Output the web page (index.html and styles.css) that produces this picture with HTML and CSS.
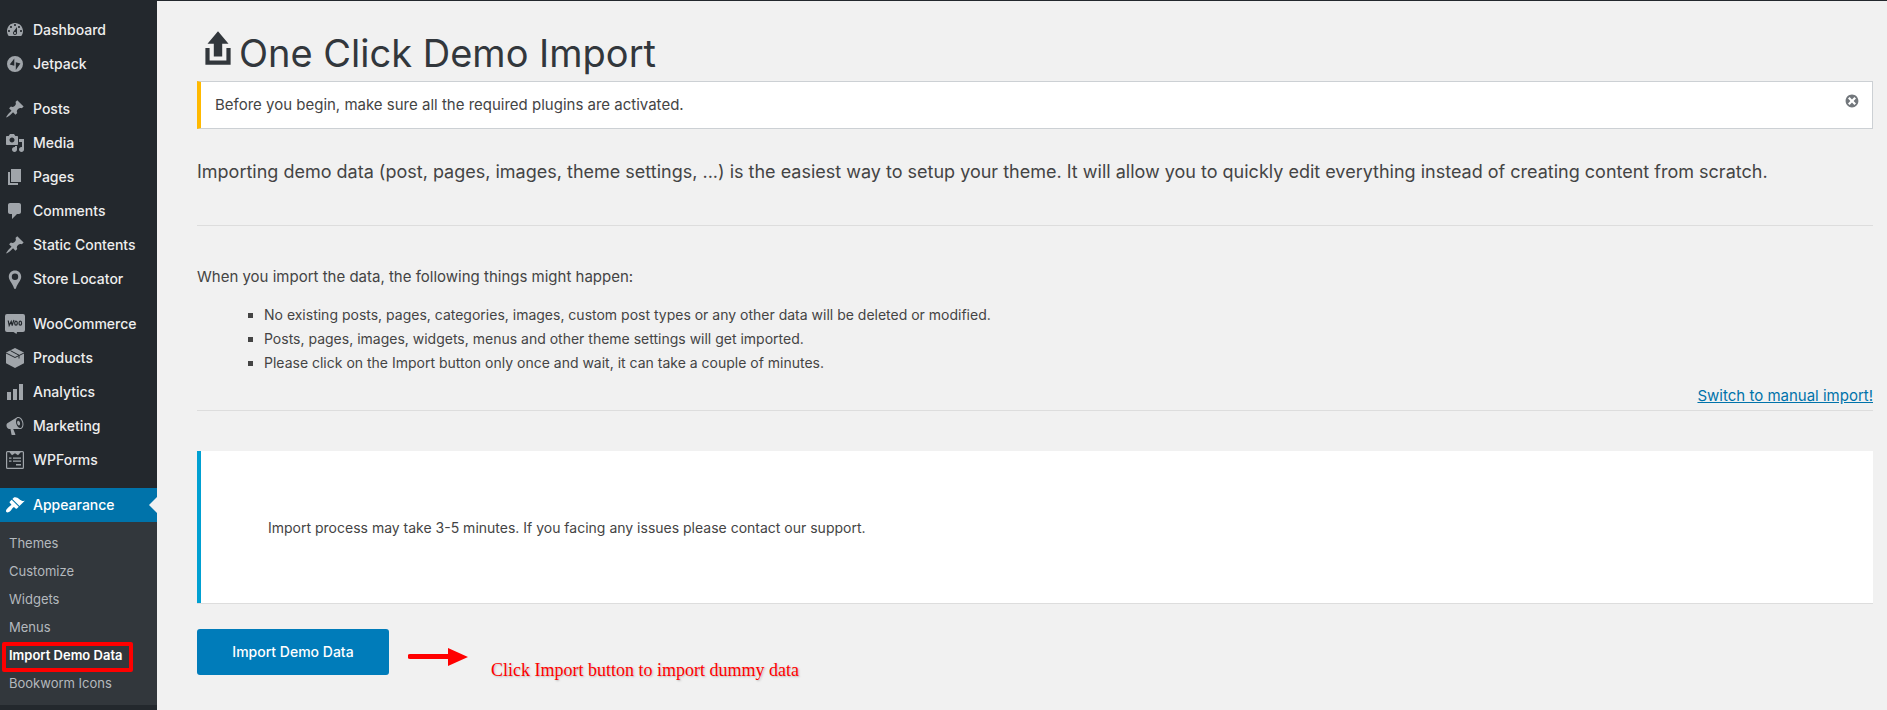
FILE: index.html
```html
<!DOCTYPE html>
<html lang="en">
<head>
<meta charset="utf-8">
<title>One Click Demo Import</title>
<link rel="stylesheet" href="styles.css">
</head>
<body>
<div class="admin">
  <nav class="sidebar" aria-label="Main menu">
    <ul class="menu">
      <li><a class="menu-link" href="#"><svg class="icon" viewBox="0 0 20 20"><path fill-rule="evenodd" d="M3.76 16h12.48c1.1-1.37 1.76-3.11 1.76-5 0-4.42-3.58-8-8-8s-8 3.58-8 8c0 1.89.66 3.63 1.76 5zM10 4c.55 0 1 .45 1 1s-.45 1-1 1-1-.45-1-1 .45-1 1-1zM6 6c.55 0 1 .45 1 1s-.45 1-1 1-1-.45-1-1 .45-1 1-1zm8 0c.55 0 1 .45 1 1s-.45 1-1 1-1-.45-1-1 .45-1 1-1zm-5.37 5.55L12 7v6c0 1.1-.9 2-2 2s-2-.9-2-2c0-.57.24-1.08.63-1.45zM4 10c.55 0 1 .45 1 1s-.45 1-1 1-1-.45-1-1 .45-1 1-1zm12 0c.55 0 1 .45 1 1s-.45 1-1 1-1-.45-1-1 .45-1 1-1zm-5 3c0-.55-.45-1-1-1s-1 .45-1 1 .45 1 1 1 1-.45 1-1z"/></svg>Dashboard</a></li>
      <li><a class="menu-link" href="#"><svg class="icon" viewBox="0 0 20 20"><path fill-rule="evenodd" d="M10 2a8 8 0 1 0 0 16 8 8 0 0 0 0-16zM9.300 4.500v7.200l-4.600-1.200zM10.800 8.300l4.600 1.200-4.600 6.500z"/></svg>Jetpack</a></li>
      <li class="group"><a class="menu-link" href="#"><svg class="icon" viewBox="0 0 20 20"><path d="M10.440 3.020l1.820-1.820 6.360 6.350-1.830 1.820c-1.050-.68-2.480-.57-3.410.36l-.75.75c-.92.93-1.040 2.350-.35 3.410l-1.830 1.820-2.410-2.410-2.800 2.790c-.42.42-3.380 2.710-3.800 2.290s1.860-3.390 2.280-3.810l2.790-2.790L4.100 9.360l1.830-1.820c1.050.69 2.480.57 3.400-.36l.75-.75c.93-.92 1.050-2.350.36-3.410z"/></svg>Posts</a></li>
      <li><a class="menu-link" href="#"><svg class="icon" viewBox="0 0 20 20"><path fill-rule="evenodd" d="M13 11V4c0-.55-.45-1-1-1h-1.670L9 1H5L3.670 3H2c-.55 0-1 .45-1 1v7c0 .55.45 1 1 1h10c.55 0 1-.45 1-1zM7 4.500c1.380 0 2.500 1.120 2.500 2.500S8.380 9.500 7 9.500 4.500 8.380 4.500 7 5.620 4.500 7 4.500zM14 6h5v10.500c0 1.380-1.120 2.500-2.500 2.500S14 17.880 14 16.500s1.120-2.500 2.500-2.500c.17 0 .34.02.5.05V9h-3V6zm-4 8.050V13h2v3.500c0 1.380-1.120 2.500-2.500 2.500S7 17.880 7 16.500 8.120 14 9.500 14c.17 0 .34.02.5.05z"/></svg>Media</a></li>
      <li><a class="menu-link" href="#"><svg class="icon" viewBox="0 0 20 20"><path d="M6 15V2h10v13H6zm-1 1h8v2H3V5h2v11z"/></svg>Pages</a></li>
      <li><a class="menu-link" href="#"><svg class="icon" viewBox="0 0 20 20"><path d="M5 2h9c1.100 0 2 .9 2 2v7c0 1.100-.9 2-2 2h-2l-5 5v-5H5c-1.100 0-2-.9-2-2V4c0-1.100.9-2 2-2z"/></svg>Comments</a></li>
      <li><a class="menu-link" href="#"><svg class="icon" viewBox="0 0 20 20"><path d="M10.440 3.020l1.820-1.820 6.360 6.350-1.830 1.820c-1.050-.68-2.480-.57-3.410.36l-.75.75c-.92.93-1.040 2.350-.35 3.410l-1.830 1.820-2.410-2.410-2.800 2.790c-.42.42-3.380 2.710-3.800 2.290s1.860-3.390 2.280-3.810l2.790-2.790L4.100 9.360l1.830-1.820c1.050.69 2.480.57 3.400-.36l.75-.75c.93-.92 1.050-2.350.36-3.410z"/></svg>Static Contents</a></li>
      <li><a class="menu-link" href="#"><svg class="icon" viewBox="0 0 20 20"><path fill-rule="evenodd" d="M10 1.500C6.500 1.500 3.800 4.200 3.800 7.700c0 3.700 4.200 7.300 5.200 11.600.2.900 1.800.9 2 0 1-4.300 5.200-7.900 5.200-11.600 0-3.500-2.700-6.200-6.200-6.200zm0 3a3.200 3.200 0 1 1 0 6.400 3.200 3.200 0 0 1 0-6.400z"/></svg>Store Locator</a></li>
      <li class="group"><a class="menu-link" href="#"><svg class="icon" viewBox="0 0 20 20"><path d="M2 0h16a2 2 0 0 1 2 2v14a2 2 0 0 1-2 2h-6l-.5 2-3-2H2a2 2 0 0 1-2-2V2a2 2 0 0 1 2-2z"/><path class="ink" d="M3.200 6.500l1 5 2-4 1 4c.5-2 1-4 1.800-5.500"/><ellipse class="ink" cx="11" cy="9.200" rx="1.300" ry="2"/><ellipse class="ink" cx="15.300" cy="9.200" rx="1.300" ry="2"/></svg>WooCommerce</a></li>
      <li><a class="menu-link" href="#"><svg class="icon" viewBox="0 0 20 20"><path d="M10 0l9 4.500v10.800L10 20l-9-4.700V4.500z"/><path class="ink thin" d="M1 5l9 4.500L19 5M5.500 2.700l8.500 4.500v3.300"/></svg>Products</a></li>
      <li><a class="menu-link" href="#"><svg class="icon" viewBox="0 0 20 20"><path d="M18 18V2h-4v16h4zm-6 0V7H8v11h4zm-6 0v-8H2v8h4z"/></svg>Analytics</a></li>
      <li><a class="menu-link" href="#"><svg class="icon" viewBox="0 0 20 20"><path fill-rule="evenodd" d="M18.150 5.940c.46 1.620.38 3.220-.02 4.480-.42 1.280-1.260 2.180-2.300 2.480-.16.06-.26.06-.4.06-.06.02-.12.02-.18.02-.06.02-.14.02-.22.02h-6.800l2.220 5.500c.02.14-.06.26-.14.34-.08.1-.24.16-.34.16H6.950c-.1 0-.26-.06-.34-.16-.08-.08-.16-.2-.14-.34l-1-5.500H4.250l-.02-.02c-.5.06-1.080-.18-1.540-.62s-.88-1.080-1.060-1.880c-.24-.8-.2-1.560-.02-2.200.18-.62.58-1.080 1.060-1.300l.02-.02 9-5.400c.1-.06.18-.1.24-.16.06-.04.14-.08.24-.12.16-.08.28-.12.5-.18 1.040-.3 2.240.1 3.220.98s1.840 2.240 2.260 3.860zm-2.580 5.980h-.02c.4-.1.74-.34 1.040-.7.58-.7.86-1.760.86-3.040 0-.64-.1-1.300-.28-1.980-.34-1.360-1.020-2.500-1.780-3.240s-1.680-1.100-2.460-.88c-.82.22-1.400.96-1.700 2-.32 1.040-.28 2.360.06 3.720.38 1.360 1 2.500 1.800 3.240.78.74 1.620 1.100 2.480.88zm-2.540-7.080c.22-.04.42-.02.62.04.38.16.76.48 1.020 1s.42 1.200.42 1.780c0 .3-.04.56-.12.8-.18.48-.44.84-.86.94-.34.1-.8-.06-1.140-.4s-.64-.86-.78-1.500c-.18-.62-.12-1.240.02-1.720s.48-.84.82-.94z"/></svg>Marketing</a></li>
      <li><a class="menu-link" href="#"><svg class="icon" viewBox="0 0 20 20"><path fill-rule="evenodd" d="M2.500 1h15A1.500 1.500 0 0 1 19 2.500v15a1.500 1.500 0 0 1-1.500 1.500h-15A1.500 1.500 0 0 1 1 17.500v-15A1.500 1.500 0 0 1 2.500 1zm-.3 1.200v15.600h15.600V2.200h-2L13 5.200l-3-2-3 2-2.500-3zM4 7.500h2.500v1.200H4zm4 0h8v1.200H8zm-4 3h2.500v1.200H4zm4 0h8v1.200H8zM11 14h5v1.500h-5z"/></svg>WPForms</a></li>
      <li class="group"><a class="menu-link current" href="#"><svg class="icon" viewBox="0 0 20 20"><path d="M14.480 11.060L7.410 3.990l1.500-1.500c.5-.56 2.300-.47 3.510.32 1.210.8 1.430 1.280 2.910 2.100 1.180.64 2.450 1.260 4.450.85zm-.71.71L6.700 4.700 4.930 6.470c-.39.39-.39 1.020 0 1.410l1.060 1.060c.39.39.39 1.030 0 1.420-.6.6-1.430 1.110-2.210 1.690-.35.26-.7.53-1.010.84C1.430 14.230.4 16.080 1.400 17.070c.99 1 2.840-.03 4.180-1.360.31-.31.58-.66.85-1.020.57-.78 1.080-1.610 1.690-2.210.39-.39 1.020-.39 1.410 0l1.060 1.060c.39.39 1.020.39 1.410 0z"/></svg>Appearance</a>
        <ul class="submenu">
          <li><a class="sub-link" href="#">Themes</a></li>
          <li><a class="sub-link" href="#">Customize</a></li>
          <li><a class="sub-link" href="#">Widgets</a></li>
          <li><a class="sub-link" href="#">Menus</a></li>
          <li><a class="sub-link active" href="#" aria-current="page">Import Demo Data</a></li>
          <li><a class="sub-link" href="#">Bookworm Icons</a></li>
        </ul>
      </li>
    </ul>
  </nav>
  <main class="content">
    <h1 class="title"><svg class="title-icon" viewBox="0 0 20 20"><path d="M8 14V8H5l5-6 5 6h-3v6H8zm-2 2v-6H4v8h12.010v-8H14v6H6z"/></svg>One Click Demo Import</h1>
    <div class="notice">
      <p>Before you begin, make sure all the required plugins are activated.</p>
      <button class="dismiss" type="button" aria-label="Dismiss this notice"><svg viewBox="0 0 20 20"><path fill-rule="evenodd" d="M10 2c4.420 0 8 3.580 8 8s-3.580 8-8 8-8-3.580-8-8 3.580-8 8-8zm5 11l-3-3 3-3-2-2-3 3-3-3-2 2 3 3-3 3 2 2 3-3 3 3z"/></svg></button>
    </div>
    <p class="lead">Importing demo data (post, pages, images, theme settings, ...) is the easiest way to setup your theme. It will allow you to quickly edit everything instead of creating content from scratch.</p>
    <section class="about">
      <p class="about-head">When you import the data, the following things might happen:</p>
      <ul class="effects">
        <li>No existing posts, pages, categories, images, custom post types or any other data will be deleted or modified.</li>
        <li>Posts, pages, images, widgets, menus and other theme settings will get imported.</li>
        <li>Please click on the Import button only once and wait, it can take a couple of minutes.</li>
      </ul>
      <a class="switch" href="#">Switch to manual import!</a>
    </section>
    <div class="info"><p>Import process may take 3-5 minutes. If you facing any issues please contact our support.</p></div>
    <div class="actions">
      <button class="import" type="button">Import Demo Data</button>
      <svg class="arrow" viewBox="0 0 60 18"><path d="M2 6h38V0l20 9-20 9v-7H2a2 2 0 0 1 0-5z"/></svg>
      <span class="hint">Click Import button to import dummy data</span>
    </div>
  </main>
</div>
</body>
</html>
```
FILE: styles.css
```css
*,
*::after {
  box-sizing: border-box;
}

body {
  margin: 0;
  background: #f1f1f1;
  color: #444;
  font-family: Inter, "Liberation Sans", sans-serif;
  font-size: 15px;
  line-height: 24px;
}

ul,
p,
h1 {
  margin: 0;
  padding: 0;
}

.admin {
  display: flex;
  min-height: 100vh;
}

/* Sidebar */
.sidebar {
  flex: none;
  width: 157px;
  padding-top: 13px;
  background: #23282d;
}

.menu,
.submenu {
  list-style: none;
}

.group {
  margin-top: 11px;
}

.menu-link {
  display: flex;
  align-items: center;
  gap: 8px;
  height: 34px;
  padding-left: 5px;
  color: #eee;
  font-size: 14px;
  font-weight: 500;
  text-decoration: none;
}

.icon {
  width: 20px;
  height: 20px;
  fill: #a0a5aa;
}

.ink {
  fill: none;
  stroke: #23282d;
  stroke-width: 1.2;
}

.thin {
  stroke-width: 1;
}

.current {
  position: relative;
  background: #0073aa;
  color: #fff;
}

.current .icon {
  fill: #fff;
}

.current::after {
  content: "";
  position: absolute;
  top: 9px;
  right: 0;
  border: 8px solid transparent;
  border-left: 0;
  border-right-color: #f1f1f1;
}

.submenu {
  padding: 7px 0 8px;
  background: #32373c;
}

.sub-link {
  display: block;
  padding-left: 9px;
  color: #b4b9be;
  font-size: 13px;
  line-height: 28px;
  text-decoration: none;
}

.active {
  position: relative;
  color: #fff;
  font-weight: 600;
}

.active::after {
  content: "";
  position: absolute;
  top: 1px;
  left: 2px;
  width: 131px;
  height: 30px;
  border: 4px solid #f00;
  border-radius: 2px;
}

/* Content */
.content {
  flex: 1;
  padding: 26px 14px 20px 40px;
  border-top: 1px solid #23282d;
}

.title {
  display: flex;
  padding-bottom: 2px;
  color: #32373c;
  font-size: 38px;
  font-weight: 400;
  line-height: 52px;
}

.title-icon {
  width: 42px;
  height: 42px;
  fill: #32373c;
}

.notice {
  display: flex;
  justify-content: space-between;
  align-items: flex-start;
  padding: 11px 12px 11px 14px;
  border: 1px solid #ccd0d4;
  border-left: 4px solid #ffb900;
  background: #fff;
}

.dismiss {
  width: 16px;
  height: 16px;
  padding: 0;
  border: 0;
  background: none;
}

.dismiss svg {
  display: block;
  fill: #72777c;
}

.lead {
  padding: 29px 0 39px;
  font-size: 18px;
  line-height: 28px;
}

.about {
  display: flex;
  flex-direction: column;
  padding: 39px 0 2px;
  border-top: 1px solid #ddd;
  border-bottom: 1px solid #ddd;
}

.effects {
  padding: 14px 0 9px 67px;
  font-size: 14px;
  list-style: square;
}

.switch {
  align-self: flex-end;
  color: #0073aa;
}

.info {
  margin: 40px 0 26px;
  padding: 65px 67px 63px;
  border-left: 4px solid #00a0d2;
  background: #fff;
  box-shadow: 0 1px 0 #ddd;
  font-size: 14px;
}

.actions {
  display: flex;
  align-items: flex-start;
}

.import {
  width: 192px;
  height: 46px;
  border: 0;
  border-radius: 3px;
  background: #007cba;
  color: #fff;
  font: 500 14px/24px Inter, sans-serif;
}

.arrow {
  width: 60px;
  height: 18px;
  margin: 19px 23px 0 19px;
  fill: #f00;
}

.hint {
  margin-top: 29px;
  color: #f00;
  font-family: "Liberation Serif", serif;
  font-size: 18px;
  text-shadow: 1px 1px 2px #bbb;
}
```
